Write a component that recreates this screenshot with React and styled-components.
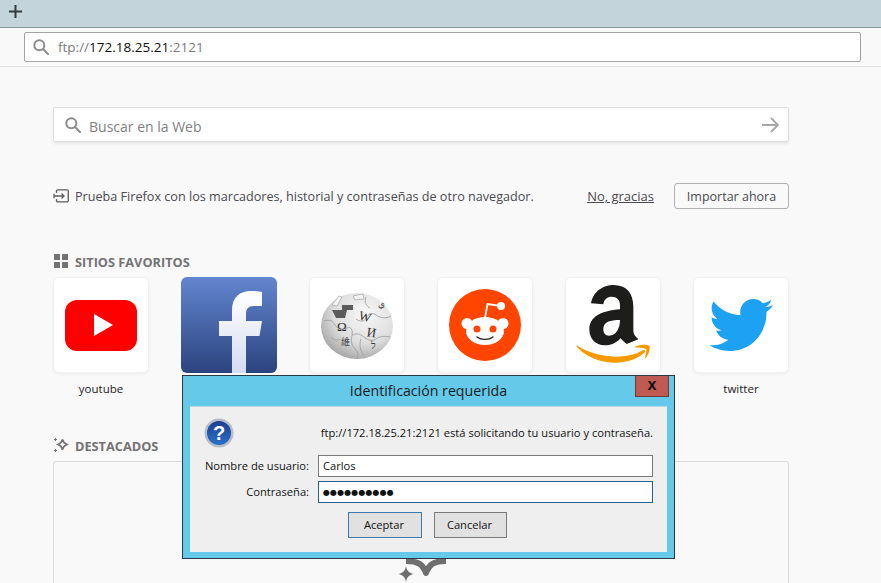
import React from "react";
import styled, { createGlobalStyle } from "styled-components";
import { FaTwitter } from "react-icons/fa";

const Global = createGlobalStyle`
  html, body { margin: 0; padding: 0; background: #f9f9fa; }
  body { width: 881px; height: 583px; overflow: hidden; font-family: "Open Sans", "Noto Sans", sans-serif; color: #4a4a4f; }
`;

const Page = styled.div`
  position: relative;
  width: 881px;
  height: 583px;
  overflow: hidden;
`;
const TabBar = styled.div`
  background: #c3d5db;
  border-bottom: 1px solid #8b979c;
  display: flex;
  align-items: flex-start;
  padding: 5px 0 0 9px;
  box-sizing: border-box;
  height: 28px;
`;
const NavBar = styled.div`
  height: 39px;
  box-sizing: border-box;
  border-bottom: 1px solid #e1e1e2;
  padding: 4px 20px 0 24px;
`;
const UrlField = styled.div`
  height: 30px;
  box-sizing: border-box;
  background: #fff;
  border: 1px solid #a3a3a3;
  border-radius: 2px;
  display: flex;
  align-items: center;
  padding-left: 8px;
  gap: 9px;
  font-size: 13.5px;
`;
const UrlPart = styled.span`
  color: ${(p) => (p.$strong ? "#111" : "#7b7b80")};
`;
const Content = styled.main`
  width: 736px;
  margin-left: 53px;
  padding-top: 40px;
`;
const SearchBox = styled.div`
  height: 35px;
  box-sizing: border-box;
  background: #fff;
  border: 1px solid #e0e0e1;
  border-radius: 2px;
  box-shadow: 0 2px 3px rgba(0, 0, 0, 0.07);
  display: flex;
  align-items: center;
  padding: 0 9px 0 11px;
  gap: 8px;
  font-size: 14px;
  color: #7f7f84;
`;
const SearchText = styled.span`
  flex: 1;
  padding-top: 4px;
`;
const ImportRow = styled.div`
  margin-top: 41px;
  height: 26px;
  display: flex;
  align-items: center;
  font-size: 12.64px;
`;
const ImportText = styled.span`
  flex: 1;
  margin-left: 6px;
`;
const Dismiss = styled.a`
  text-decoration: underline;
  margin-right: 20px;
  color: #4a4a4f;
  font-size: 13px;
`;
const ImportButton = styled.button`
  width: 115px;
  height: 26px;
  box-sizing: border-box;
  padding: 1px 0 0;
  background: #f9f9fa;
  border: 1px solid #b1b1b3;
  border-radius: 3px;
  font: inherit;
  font-size: 12.5px;
  color: #4a4a4f;
`;
const SectionHeader = styled.h3`
  margin: ${(p) => p.$top}px 0 8px;
  height: 16px;
  display: flex;
  align-items: center;
  gap: 6px;
  font-size: 12.75px;
  line-height: 16px;
  font-weight: 700;
  color: #737373;
`;
const HeaderGlyph = styled.span`
  width: 16px;
  display: flex;
  justify-content: center;
`;
const HeaderLabel = styled.span`
  padding-top: 1px;
`;
const TileGrid = styled.div`
  display: grid;
  grid-template-columns: repeat(6, 96px);
  column-gap: 32px;
`;
const Site = styled.div`
  display: flex;
  flex-direction: column;
  align-items: center;
`;
const Tile = styled.div`
  width: 96px;
  height: 96px;
  box-sizing: border-box;
  border-radius: 6px;
  background: ${(p) => p.$bg || "#fff"};
  box-shadow: ${(p) => (p.$bg ? "none" : "inset 0 0 0 1px #f0f0f1, 0 1px 3px rgba(0,0,0,.06)")};
  overflow: hidden;
  display: flex;
  align-items: center;
  justify-content: center;
`;
const SiteName = styled.span`
  margin-top: 8px;
  font-size: 11.5px;
  line-height: 16px;
  color: #222;
`;
const Card = styled.div`
  height: 200px;
  box-sizing: border-box;
  border: 1px solid #dcdcdd;
  border-radius: 3px;
  padding-top: 58px;
  display: flex;
  justify-content: center;
  align-items: flex-start;
`;

const Dialog = styled.section`
  position: absolute;
  left: 182px;
  top: 375px;
  width: 493px;
  height: 184px;
  box-sizing: border-box;
  border: 1px solid #2b3a40;
  background: #65c9ea;
  padding: 0 7px 6px;
  display: flex;
  flex-direction: column;
`;
const TitleBar = styled.header`
  height: 30px;
  box-sizing: border-box;
  padding-bottom: 2px;
  display: flex;
  align-items: center;
  justify-content: center;
  font-size: 14.2px;
  color: #1b1b1b;
`;
const CloseButton = styled.div`
  position: absolute;
  top: 0;
  right: 5px;
  width: 34px;
  height: 21px;
  box-sizing: border-box;
  background: #c0594f;
  border: 1px solid #6d3c3a;
  border-top: 0;
  display: flex;
  align-items: center;
  justify-content: center;
  padding-bottom: 2px;
  font-family: "Liberation Sans", sans-serif;
  font-size: 16px;
  line-height: 14px;
  font-weight: 700;
  color: #111;
`;
const Client = styled.div`
  flex: 1;
  background: #efefef;
  border-top: 1px solid #b9d7e2;
  display: flex;
  flex-direction: column;
  padding: 0 14px;
  font-size: 11.15px;
  color: #111;
`;
const MessageRow = styled.div`
  height: 48px;
  box-sizing: border-box;
  padding-top: 4px;
  display: flex;
  align-items: center;
  justify-content: space-between;
`;
const MessageText = styled.span`
  padding-bottom: 2px;
`;
const FormRow = styled.div`
  display: grid;
  grid-template-columns: 105px 335px;
  column-gap: 9px;
  align-items: center;
  margin-bottom: 4px;
`;
const FieldLabel = styled.label`
  text-align: right;
  white-space: nowrap;
  padding-bottom: 2px;
`;
const Field = styled.div`
  height: 22px;
  box-sizing: border-box;
  background: #fff;
  border: 1px solid ${(p) => (p.$focus ? "#26608f" : "#7a7a7a")};
  display: flex;
  align-items: center;
  padding: ${(p) => (p.$dots ? "0 0 0 4px" : "0 0 2px 4px")};
  font-family: ${(p) => (p.$dots ? '"DejaVu Sans", sans-serif' : "inherit")};
  font-size: ${(p) => (p.$dots ? "8px" : "11.15px")};
  letter-spacing: ${(p) => (p.$dots ? "0.1px" : "0")};
`;
const ButtonRow = styled.div`
  margin-top: 5px;
  margin-left: 144px;
  display: flex;
  gap: 12px;
`;
const DialogButton = styled.button`
  height: 26px;
  width: ${(p) => p.$w}px;
  box-sizing: border-box;
  padding: 0 2px 2px 0;
  background: #e1e1e1;
  border: 1px solid ${(p) => (p.$primary ? "#3a7ab0" : "#7a7a7a")};
  font: inherit;
  color: #111;
`;

const Glass = ({ size = 16, sw = 2 }) => (
  <svg width={size} height={size} viewBox="0 0 16 16" fill="none" stroke="#8c8c8c" strokeWidth={sw}>
    <circle cx="6.3" cy="6.3" r="5" />
    <path d="M10 10l5.2 5.2" strokeLinecap="round" />
  </svg>
);
const Plus = () => (
  <svg width="13" height="13" viewBox="0 0 13 13" stroke="#333a3d" strokeWidth="2">
    <path d="M6.5 0v13M0 6.5h13" />
  </svg>
);
const ArrowIcon = () => (
  <svg width="17" height="16" viewBox="0 0 17 16" fill="none" stroke="#a6a6a6" strokeWidth="1.8">
    <path d="M0 8h15.5M9 1l7 7-7 7" />
  </svg>
);
const ImportIcon = () => (
  <svg width="16" height="14" viewBox="0 0 16 14" fill="none" stroke="#5c5c5f" strokeWidth="1.3">
    <path d="M3.5 4V2a1.2 1.2 0 011.2-1.2h9.4A1.2 1.2 0 0115.3 2v9.6a1.2 1.2 0 01-1.2 1.2H4.7a1.2 1.2 0 01-1.2-1.2V10" />
    <path d="M11 7H1M8.500 4.500L11 7l-2.500 2.500M1 4.800v4.400" />
  </svg>
);
const GridIcon = () => (
  <svg width="14" height="14" viewBox="0 0 14 14" fill="#737373">
    <rect x="0" y="0" width="6" height="6" />
    <rect x="8" y="0" width="6" height="6" />
    <rect x="0" y="8" width="6" height="6" />
    <rect x="8" y="8" width="6" height="6" />
  </svg>
);
const Sparkle = () => (
  <svg width="16" height="16" viewBox="0 0 16 16" fill="none" stroke="#737373" strokeWidth="1.7">
    <path d="M9.500 2.500c.6 3 1.500 3.700 4.500 5-3 1.200-3.900 2-4.500 5.200C8.800 9.500 8 8.800 5 7.500c3-1.300 3.800-2 4.500-5z" />
    <path d="M2.500 1v3M1 2.500h3M2.500 12v3M1 13.500h3" strokeWidth="1.100" />
  </svg>
);
const BigSparkle = () => (
  <svg width="60" height="63" viewBox="391 520 60 63" fill="none">
    <path d="M406 561C419 561 423 565 426 573C429 565 433 561 446 561" stroke="#6f6f6f" strokeWidth="6" strokeLinejoin="round" />
    <path d="M406 566c1 5 2.500 6.500 7.500 8-5 1.500-6.500 3-7.500 8-1-5-2.500-6.500-7.500-8 5-1.500 6.500-3 7.500-8z" fill="#6f6f6f" />
  </svg>
);
const YouTubeLogo = () => (
  <svg width="96" height="96" viewBox="0 0 96 96">
    <rect x="12" y="23" width="72" height="51" rx="12" fill="#ff0000" />
    <path d="M41 37l19 11-19 11z" fill="#fff" />
  </svg>
);
const FacebookLogo = () => (
  <svg width="96" height="96" viewBox="0 0 96 96">
    <defs>
      <linearGradient id="fbf" x1="0" y1="0" x2="0" y2="1">
        <stop offset="0" stopColor="#ffffff" />
        <stop offset="1" stopColor="#d4dcf0" />
      </linearGradient>
    </defs>
    <path d="M51 96V59H38V44h13V33c0-13 8-19 19-19 5 0 9 .5 11 1v14h-8c-6 0-8 3-8 8v7h16l-2.500 15H65v37z" fill="url(#fbf)" />
  </svg>
);
const WikipediaLogo = () => (
  <svg width="96" height="96" viewBox="0 0 96 96">
    <defs>
      <radialGradient id="globe" cx="0.62" cy="0.32" r="0.8">
        <stop offset="0" stopColor="#f8f8f8" />
        <stop offset="0.55" stopColor="#dedede" />
        <stop offset="1" stopColor="#969696" />
      </radialGradient>
    </defs>
    <ellipse cx="48" cy="49" rx="36" ry="33" fill="url(#globe)" />
    <path
      d="M15 44c6-2 9 0 11 4s8 5 12 3 6 2 5 7-1 10 3 14 3 7 2 10M47 42c4 3 8 3 10-1s6-6 10-3 10 4 15 1M43 58c5-2 8-1 12 2s8 5 12 2 9-3 14-2M22 60c3 3 6 4 10 2M57 20c-2 5 0 9 4 11M52 62c-2 6-1 12 3 17"
      fill="none"
      stroke="#a2a2a2"
      strokeWidth="0.9"
    />
    <path d="M23 33h10v-5h11v5h-6l-2 8H27z" fill="#5c5c5c" />
    <path d="M23 28l7-9 3 1-5 9zM44 19l10-2 1 5-9 1z" fill="#f4f4f4" stroke="#9a9a9a" strokeWidth="0.6" />
    <text x="28" y="54" fontSize="13" fontFamily="Liberation Serif, serif" fill="#2c2c2c">Ω</text>
    <text x="50" y="44" fontSize="13" fontFamily="Liberation Serif, serif" fill="#333" transform="rotate(15 56 39)">W</text>
    <text x="58" y="60" fontSize="13" fontFamily="Liberation Serif, serif" fill="#333" transform="rotate(8 63 55)">И</text>
    <text x="32" y="68" fontSize="9" fontFamily="Noto Sans CJK SC, sans-serif" fill="#444">維</text>
    <text x="62" y="72" fontSize="10" fontFamily="Liberation Serif, serif" fill="#333">ל</text>
    <text x="69" y="30" fontSize="9" fontFamily="Liberation Serif, serif" fill="#333">ي</text>
  </svg>
);
const RedditLogo = () => (
  <svg width="96" height="96" viewBox="0 0 96 96">
    <circle cx="48" cy="48" r="36" fill="#ff4500" />
    <path d="M48 41l2.500-14 13.500 2" fill="none" stroke="#fff" strokeWidth="1.800" />
    <circle cx="64" cy="29" r="4" fill="#fff" />
    <circle cx="30" cy="46.500" r="5.500" fill="#fff" />
    <circle cx="66" cy="46.500" r="5.500" fill="#fff" />
    <ellipse cx="48" cy="54" rx="19" ry="14" fill="#fff" />
    <circle cx="40" cy="52" r="3.500" fill="#ff4500" />
    <circle cx="56" cy="52" r="3.500" fill="#ff4500" />
    <path d="M40 60c4 3.200 12 3.200 16 0" fill="none" stroke="#222" strokeWidth="1.300" strokeLinecap="round" />
  </svg>
);
const AmazonLogo = () => (
  <svg width="96" height="96" viewBox="405 21 288 288">
    <path
      fillRule="evenodd"
      fill="#1d1d1b"
      d="M483 100C490 60 525 45 550 45C590 45 610 70 610 110V180C610 195 618 200 625 208L590 222C580 215 578 212 572 205C555 222 540 226 525 226C495 226 478 205 478 178C478 140 515 122 570 118V105C570 90 560 80 545 80C532 80 522 88 520 103ZM570 150C540 150 520 155 520 178C520 190 527 197 537 197C558 197 570 175 570 150Z"
    />
    <path d="M440 226C490 260 580 275 640 240C646 238 648 245 642 249C590 295 490 285 440 230Z" fill="#f79a00" />
    <path d="M612 232C625 222 650 222 659 228C661 240 653 260 645 266C648 250 650 240 648 237C640 233 625 234 612 232Z" fill="#f79a00" />
  </svg>
);
const TwitterLogo = styled(FaTwitter)`
  width: 64px;
  height: 64px;
  color: #1da1f2;
`;
const QuestionIcon = () => (
  <svg width="30" height="30" viewBox="0 0 30 30">
    <defs>
      <linearGradient id="qb" x1="0" y1="0" x2="0" y2="1">
        <stop offset="0" stopColor="#1b3f8f" />
        <stop offset="1" stopColor="#2b70c9" />
      </linearGradient>
    </defs>
    <circle cx="15" cy="15" r="14.500" fill="#b7bcc6" />
    <circle cx="15" cy="15" r="12" fill="url(#qb)" />
    <text x="15" y="22" textAnchor="middle" fontSize="20" fontWeight="700" fontFamily="Liberation Sans, sans-serif" fill="#fff">?</text>
  </svg>
);

const sites = [
  { id: "yt", name: "youtube", logo: <YouTubeLogo /> },
  { id: "fb", logo: <FacebookLogo />, bg: "linear-gradient(#6286d0, #2c437f)" },
  { id: "wp", logo: <WikipediaLogo /> },
  { id: "rd", logo: <RedditLogo /> },
  { id: "az", logo: <AmazonLogo /> },
  { id: "tw", name: "twitter", logo: <TwitterLogo /> },
];

export default function App() {
  return (
    <Page>
      <Global />
      <TabBar>
        <Plus />
      </TabBar>
      <NavBar>
        <UrlField>
          <Glass />
          <span>
            <UrlPart>ftp://</UrlPart>
            <UrlPart $strong>172.18.25.21</UrlPart>
            <UrlPart>:2121</UrlPart>
          </span>
        </UrlField>
      </NavBar>
      <Content>
        <SearchBox>
          <Glass />
          <SearchText>Buscar en la Web</SearchText>
          <ArrowIcon />
        </SearchBox>
        <ImportRow>
          <ImportIcon />
          <ImportText>Prueba Firefox con los marcadores, historial y contraseñas de otro navegador.</ImportText>
          <Dismiss>No, gracias</Dismiss>
          <ImportButton>Importar ahora</ImportButton>
        </ImportRow>
        <SectionHeader $top={44}>
          <HeaderGlyph><GridIcon /></HeaderGlyph>
          <HeaderLabel>SITIOS FAVORITOS</HeaderLabel>
        </SectionHeader>
        <TileGrid>
          {sites.map((s) => (
            <Site key={s.id}>
              <Tile $bg={s.bg}>{s.logo}</Tile>
              {s.name && <SiteName>{s.name}</SiteName>}
            </Site>
          ))}
        </TileGrid>
        <SectionHeader $top={40}>
          <HeaderGlyph><Sparkle /></HeaderGlyph>
          <HeaderLabel>DESTACADOS</HeaderLabel>
        </SectionHeader>
        <Card>
          <BigSparkle />
        </Card>
      </Content>
      <Dialog>
        <TitleBar>Identificación requerida</TitleBar>
        <CloseButton>x</CloseButton>
        <Client>
          <MessageRow>
            <QuestionIcon />
            <MessageText>ftp://172.18.25.21:2121 está solicitando tu usuario y contraseña.</MessageText>
          </MessageRow>
          <FormRow>
            <FieldLabel>Nombre de usuario:</FieldLabel>
            <Field>Carlos</Field>
          </FormRow>
          <FormRow>
            <FieldLabel>Contraseña:</FieldLabel>
            <Field $focus $dots>●●●●●●●●●●</Field>
          </FormRow>
          <ButtonRow>
            <DialogButton $primary $w={74}>Aceptar</DialogButton>
            <DialogButton $w={73}>Cancelar</DialogButton>
          </ButtonRow>
        </Client>
      </Dialog>
    </Page>
  );
}
